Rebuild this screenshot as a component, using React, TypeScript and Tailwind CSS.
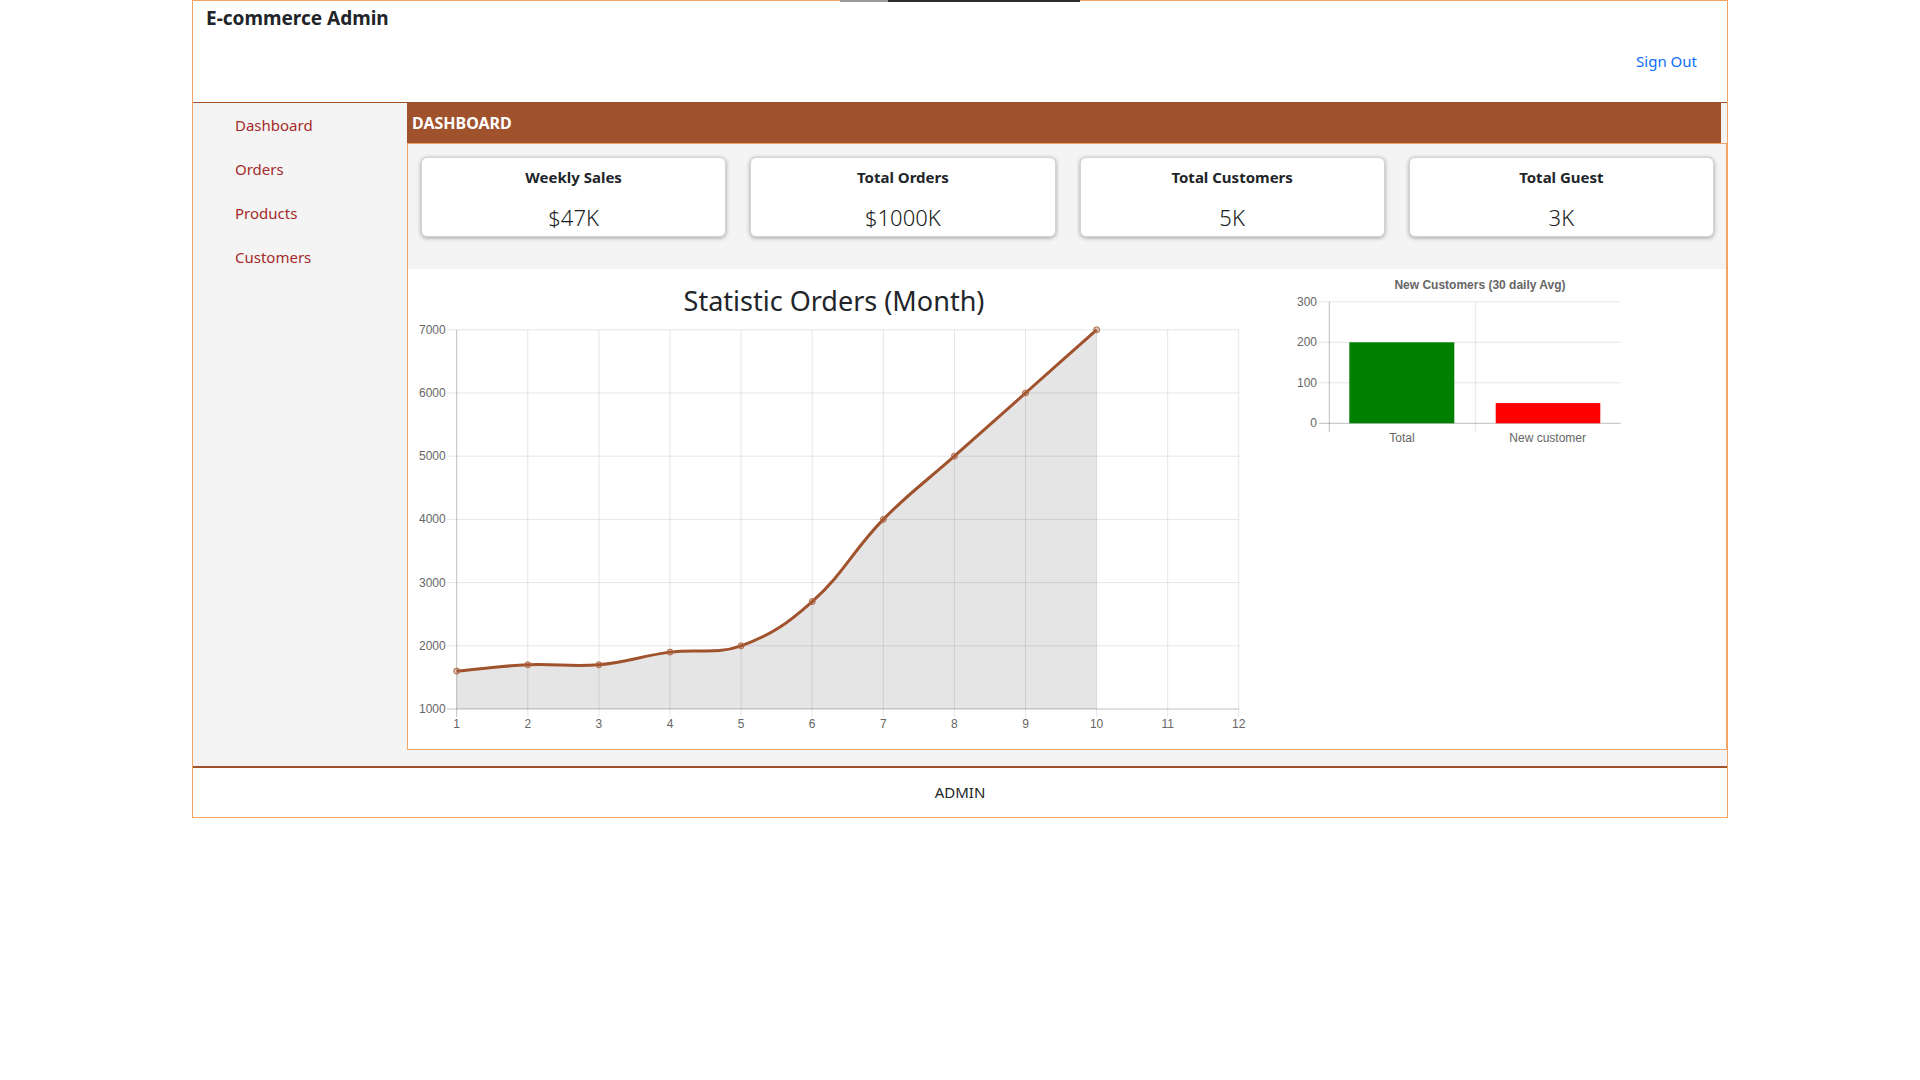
import React from 'react';

const orders = [1600, 1700, 1700, 1900, 2000, 2700, 4000, 5000, 6000, 7000];

const stats = [
  { title: 'Weekly Sales', value: '$47K' },
  { title: 'Total Orders', value: '$1000K' },
  { title: 'Total Customers', value: '5K' },
  { title: 'Total Guest', value: '3K' },
];

const navItems = ['Dashboard', 'Orders', 'Products', 'Customers'];

// line chart geometry (svg coords)
const X = (m: number) => 48.7 + (m - 1) * 71.1;
const Y = (v: number) => 392 - (v - 1000) * 0.0632;

function splinePath(pts: { x: number; y: number }[], t = 0.4) {
  const ctrl = pts.map((cur, i) => {
    const prev = pts[i - 1] || cur;
    const next = pts[i + 1] || cur;
    const d01 = Math.hypot(cur.x - prev.x, cur.y - prev.y);
    const d12 = Math.hypot(next.x - cur.x, next.y - cur.y);
    const sum = d01 + d12 || 1;
    const fa = (t * d01) / sum;
    const fb = (t * d12) / sum;
    return {
      inX: cur.x - fa * (next.x - prev.x),
      inY: cur.y - fa * (next.y - prev.y),
      outX: cur.x + fb * (next.x - prev.x),
      outY: cur.y + fb * (next.y - prev.y),
    };
  });
  let d = `M${pts[0].x},${pts[0].y}`;
  for (let i = 1; i < pts.length; i++) {
    d += ` C${ctrl[i - 1].outX},${ctrl[i - 1].outY} ${ctrl[i].inX},${ctrl[i].inY} ${pts[i].x},${pts[i].y}`;
  }
  return d;
}

const LineChart = () => {
  const pts = orders.map((v, i) => ({ x: X(i + 1), y: Y(v) }));
  const line = splinePath(pts);
  const area = `${line} L${pts[pts.length - 1].x},${Y(1000)} L${pts[0].x},${Y(1000)} Z`;
  const months = Array.from({ length: 12 }, (_, i) => i + 1);
  const levels = [1000, 2000, 3000, 4000, 5000, 6000, 7000];

  return (
    <svg width="852" height="432" className="block">
      {/* grid */}
      {levels.map((v) => (
        <g key={v}>
          <line x1={X(1) - 10} x2={X(12)} y1={Y(v)} y2={Y(v)} stroke={v === 1000 ? 'rgba(0,0,0,0.25)' : 'rgba(0,0,0,0.1)'} />
          <text x={X(1) - 11} y={Y(v) + 4} textAnchor="end" fontSize="12" fill="#666" fontFamily="Liberation Sans, Arial, sans-serif">
            {v}
          </text>
        </g>
      ))}
      {months.map((m) => (
        <g key={m}>
          <line x1={X(m)} x2={X(m)} y1={Y(7000)} y2={Y(1000) + 8} stroke={m === 1 ? 'rgba(0,0,0,0.25)' : 'rgba(0,0,0,0.1)'} />
          <text x={X(m)} y={Y(1000) + 19} textAnchor="middle" fontSize="12" fill="#666" fontFamily="Liberation Sans, Arial, sans-serif">
            {m}
          </text>
        </g>
      ))}
      <path d={area} fill="rgba(0,0,0,0.1)" />
      <path d={line} fill="none" stroke="#a0522d" strokeWidth="3" />
      {pts.map((p, i) => (
        <circle key={i} cx={p.x} cy={p.y} r="3" fill="rgba(160,82,45,0.35)" stroke="#b06a48" strokeWidth="1" />
      ))}
    </svg>
  );
};

const BarChart = () => {
  const yb = (v: number) => 154.3 - v * 0.405;
  return (
    <svg width="380" height="190" className="block">
      <text x="210" y="20" textAnchor="middle" fontSize="12" fontWeight="bold" fill="#666" fontFamily="Liberation Sans, Arial, sans-serif">
        New Customers (30 daily Avg)
      </text>
      {[0, 100, 200, 300].map((v) => (
        <g key={v}>
          <line x1="49" x2="350.7" y1={yb(v)} y2={yb(v)} stroke={v === 0 ? 'rgba(0,0,0,0.25)' : 'rgba(0,0,0,0.1)'} />
          <text x="47" y={yb(v) + 4} textAnchor="end" fontSize="12" fill="#666" fontFamily="Liberation Sans, Arial, sans-serif">
            {v}
          </text>
        </g>
      ))}
      <line x1="59.3" x2="59.3" y1={yb(300)} y2="163" stroke="rgba(0,0,0,0.25)" />
      <line x1="205.7" x2="205.7" y1={yb(300)} y2="163" stroke="rgba(0,0,0,0.1)" />
      <rect x="79.3" y={yb(200)} width="105" height={yb(0) - yb(200)} fill="#008000" />
      <rect x="225.7" y={yb(50)} width="104.6" height={yb(0) - yb(50)} fill="#ff0000" />
      <text x="132" y="173" textAnchor="middle" fontSize="12" fill="#666" fontFamily="Liberation Sans, Arial, sans-serif">
        Total
      </text>
      <text x="277.7" y="173" textAnchor="middle" fontSize="12" fill="#666" fontFamily="Liberation Sans, Arial, sans-serif">
        New customer
      </text>
    </svg>
  );
};

export default function App() {
  return (
    <div className="relative min-h-screen bg-white font-['Noto_Sans',sans-serif] text-[#212529]">
      <div className="absolute left-[840px] top-0 h-[2px] w-[48px] bg-[#9a9a9a]" />
      <div className="absolute left-[888px] top-0 h-[2px] w-[192px] bg-[#2b2b2b]" />

      <div className="mx-auto w-[1536px] border border-[#f4a460]">
        {/* Header */}
        <header className="flex h-[102px] justify-between border-b border-[#a0522d] pl-[13px] pr-[30px]">
          <h1 className="pt-[3px] text-[19px] font-bold leading-[28px]">E-commerce Admin</h1>
          <a href="#" className="pt-[48px] text-[15px] leading-[24px] text-[#0d6efd]">
            Sign Out
          </a>
        </header>

        <div className="flex bg-[#f4f4f4]">
          {/* Sidebar */}
          <aside className="w-[214px] shrink-0 pl-[42px]">
            <ul className="flex flex-col">
              {navItems.map((item) => (
                <li key={item} className="h-[44px] text-[15px] leading-[44px] text-[#a52a2a]">
                  {item}
                </li>
              ))}
            </ul>
          </aside>

          {/* Main */}
          <main className="min-w-0 flex-1 pb-[16px]">
            <div className="mr-[6px] flex h-[40px] items-center bg-[#a0522d] pl-[5px] text-[16px] font-bold text-white">
              DASHBOARD
            </div>
            <section className="border border-[#f4a460]">
              {/* Cards */}
              <div className="grid grid-cols-4 gap-[24px] bg-[#f4f4f4] pb-[32px] pl-[13px] pr-[12px] pt-[13px]">
                {stats.map((s) => (
                  <div
                    key={s.title}
                    className="flex h-[80px] flex-col items-center rounded-[6px] border border-[#d4d4d4] bg-white shadow-[0_1px_4px_rgba(0,0,0,0.35)]"
                  >
                    <span className="mt-[7px] text-[15px] font-bold leading-[24px]">{s.title}</span>
                    <span className="mt-[12px] text-[22px] font-light leading-[32px] text-[#1a1d21]">{s.value}</span>
                  </div>
                ))}
              </div>

              {/* Charts */}
              <div className="flex h-[480px] bg-white">
                <div className="w-[852px] shrink-0">
                  <h2 className="pt-[15px] text-center text-[27px] leading-[33px]">Statistic Orders (Month)</h2>
                  <LineChart />
                </div>
                <div className="ml-[10px]">
                  <BarChart />
                </div>
              </div>
            </section>
          </main>
        </div>

        {/* Footer */}
        <footer className="flex h-[51px] items-center justify-center border-t-2 border-[#a0522d] text-[15px]">
          ADMIN
        </footer>
      </div>
    </div>
  );
}
